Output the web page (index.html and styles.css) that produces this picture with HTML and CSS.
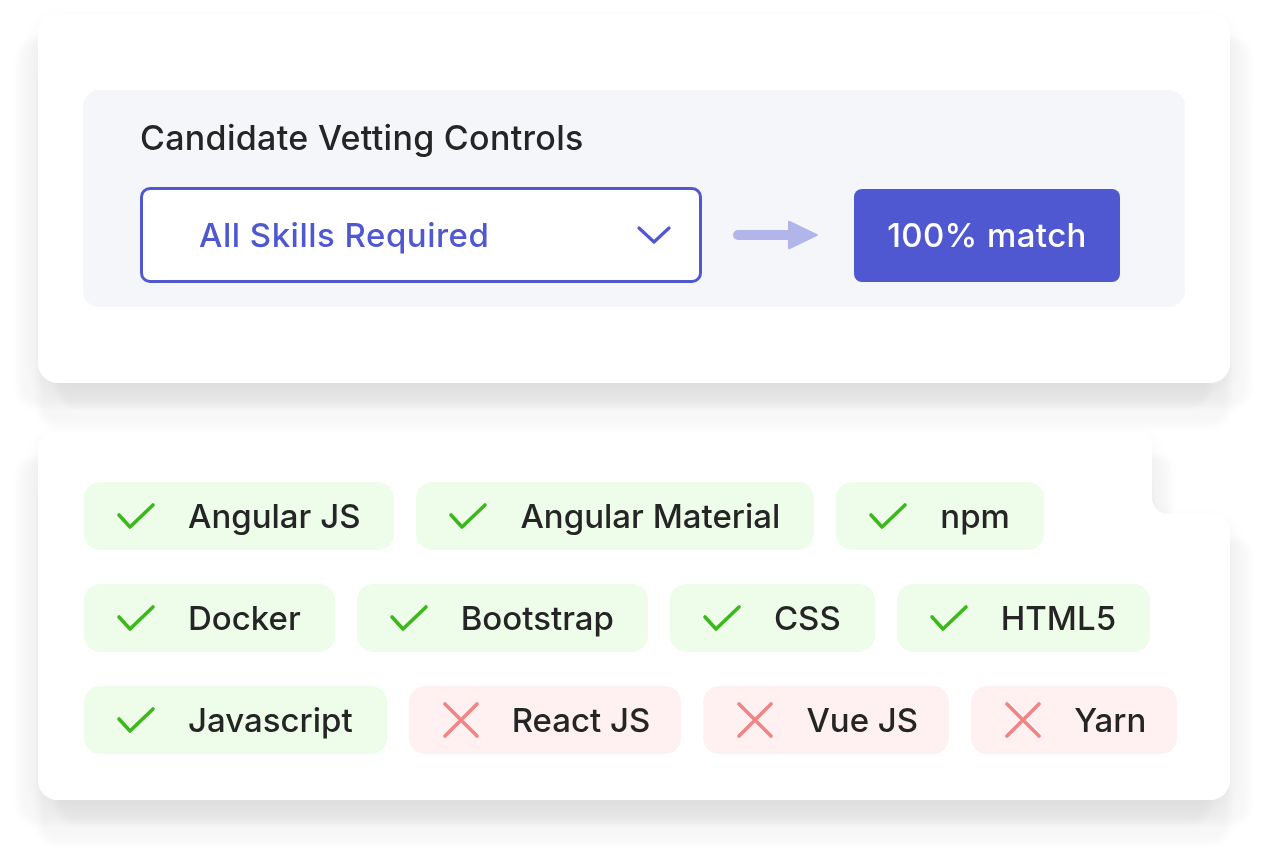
FILE: index.html
```html
<!DOCTYPE html>
<html>
<head>
<meta charset="utf-8">
<link rel="stylesheet" href="styles.css">
</head>
<body>
<div class="page">
  <div class="shadow-wrap">
    <section class="card card-top">
      <div class="panel">
        <h2 class="panel-title">Candidate Vetting Controls</h2>
        <div class="controls">
          <div class="select">
            <span class="select-text">All Skills Required</span>
            <svg class="chevron" width="34" height="18" viewBox="0 0 34 18"><path d="M2 2 L17 16 L32 2" fill="none" stroke="#4f58d1" stroke-width="3.2" stroke-linecap="round" stroke-linejoin="round"/></svg>
          </div>
          <svg class="arrow" width="86" height="30" viewBox="0 0 86 30"><line x1="5" y1="15" x2="58" y2="15" stroke="#b1b5ea" stroke-width="10" stroke-linecap="round"/><path d="M55 2 Q55 0 57 1 L84 14 Q86 15 84 16 L57 29 Q55 30 55 28 Z" fill="#b1b5ea"/></svg>
          <div class="match-btn">100% match</div>
        </div>
      </div>
    </section>
  </div>

  <div class="shadow-wrap">
    <section class="card card-skills">
      <div class="chip-row">
        <div class="chip ok"><svg class="ico" width="40" height="28" viewBox="0 0 40 28"><path d="M3 13 L14 25 L37 3" fill="none" stroke="#3cb81d" stroke-width="3.6" stroke-linecap="round" stroke-linejoin="round"/></svg><span>Angular JS</span></div>
        <div class="chip ok"><svg class="ico" width="40" height="28" viewBox="0 0 40 28"><path d="M3 13 L14 25 L37 3" fill="none" stroke="#3cb81d" stroke-width="3.6" stroke-linecap="round" stroke-linejoin="round"/></svg><span>Angular Material</span></div>
        <div class="chip ok"><svg class="ico" width="40" height="28" viewBox="0 0 40 28"><path d="M3 13 L14 25 L37 3" fill="none" stroke="#3cb81d" stroke-width="3.6" stroke-linecap="round" stroke-linejoin="round"/></svg><span>npm</span></div>
      </div>
      <div class="chip-row">
        <div class="chip ok"><svg class="ico" width="40" height="28" viewBox="0 0 40 28"><path d="M3 13 L14 25 L37 3" fill="none" stroke="#3cb81d" stroke-width="3.6" stroke-linecap="round" stroke-linejoin="round"/></svg><span>Docker</span></div>
        <div class="chip ok"><svg class="ico" width="40" height="28" viewBox="0 0 40 28"><path d="M3 13 L14 25 L37 3" fill="none" stroke="#3cb81d" stroke-width="3.6" stroke-linecap="round" stroke-linejoin="round"/></svg><span>Bootstrap</span></div>
        <div class="chip ok"><svg class="ico" width="40" height="28" viewBox="0 0 40 28"><path d="M3 13 L14 25 L37 3" fill="none" stroke="#3cb81d" stroke-width="3.6" stroke-linecap="round" stroke-linejoin="round"/></svg><span>CSS</span></div>
        <div class="chip ok"><svg class="ico" width="40" height="28" viewBox="0 0 40 28"><path d="M3 13 L14 25 L37 3" fill="none" stroke="#3cb81d" stroke-width="3.6" stroke-linecap="round" stroke-linejoin="round"/></svg><span>HTML5</span></div>
      </div>
      <div class="chip-row">
        <div class="chip ok"><svg class="ico" width="40" height="28" viewBox="0 0 40 28"><path d="M3 13 L14 25 L37 3" fill="none" stroke="#3cb81d" stroke-width="3.6" stroke-linecap="round" stroke-linejoin="round"/></svg><span>Javascript</span></div>
        <div class="chip no"><svg class="ico" width="40" height="36" viewBox="0 0 40 36"><path d="M4 2 L36 34 M36 2 L4 34" fill="none" stroke="#f08585" stroke-width="3.6" stroke-linecap="round"/></svg><span>React JS</span></div>
        <div class="chip no"><svg class="ico" width="40" height="36" viewBox="0 0 40 36"><path d="M4 2 L36 34 M36 2 L4 34" fill="none" stroke="#f08585" stroke-width="3.6" stroke-linecap="round"/></svg><span>Vue JS</span></div>
        <div class="chip no"><svg class="ico" width="40" height="36" viewBox="0 0 40 36"><path d="M4 2 L36 34 M36 2 L4 34" fill="none" stroke="#f08585" stroke-width="3.6" stroke-linecap="round"/></svg><span>Yarn</span></div>
      </div>
    </section>
  </div>
</div>
</body>
</html>
```

FILE: styles.css
```css
html, body {
  margin: 0;
  padding: 0;
  background: #ffffff;
}

body {
  font-family: "Inter", "Noto Sans", sans-serif;
  color: #252525;
  min-height: 864px;
}

.page {
  padding: 14px 0 64px 38px;
  display: flex;
  flex-direction: column;
  gap: 49px;
}

.shadow-wrap {
  width: 1192px;
  filter:
    drop-shadow(0 43px 3px rgba(0, 0, 0, 0.03))
    drop-shadow(-19px 24px 3px rgba(0, 0, 0, 0.03))
    drop-shadow(19px 24px 3px rgba(0, 0, 0, 0.03))
    drop-shadow(0 9px 9px rgba(0, 0, 0, 0.055));
}

.card {
  box-sizing: border-box;
  width: 1192px;
}

.card-top {
  background: #ffffff;
  height: 369px;
  border-radius: 20px;
  padding: 76px 45px;
}

.panel {
  background: #f5f6fa;
  border-radius: 16px;
  height: 217px;
  box-sizing: border-box;
  padding: 28px 57px 24px 57px;
}

.panel-title {
  margin: 0 0 29px 0;
  font-size: 34px;
  line-height: 40px;
  font-weight: 500;
  letter-spacing: 0.3px;
  color: #252525;
}

.controls {
  display: flex;
  align-items: center;
}

.select {
  box-sizing: border-box;
  width: 562px;
  height: 96px;
  border: 3px solid #4f58d1;
  border-radius: 10px;
  background: #ffffff;
  display: flex;
  align-items: center;
  justify-content: space-between;
  padding: 0 28px 0 56px;
}

.select-text {
  font-size: 33px;
  font-weight: 500;
  letter-spacing: 0.5px;
  color: #4f58d1;
}

.chevron {
  display: block;
}

.arrow {
  display: block;
  margin: 0 35px 0 31px;
}

.match-btn {
  width: 266px;
  height: 93px;
  border-radius: 8px;
  background: #4f58d1;
  color: #ffffff;
  display: flex;
  align-items: center;
  justify-content: center;
  font-size: 33px;
  font-weight: 500;
  letter-spacing: 0.4px;
}

/* notched card: white shape built from two rounded blocks plus a concave fillet */
.card-skills {
  position: relative;
  z-index: 0;
  height: 368px;
  padding: 50px 46px 46px 46px;
  display: flex;
  flex-direction: column;
  gap: 34px;
  background: radial-gradient(circle at 100% 0, rgba(255, 255, 255, 0) 15.5px, #ffffff 16.5px) 1114px 66px / 16px 16px no-repeat;
}

.card-skills::before,
.card-skills::after {
  content: "";
  position: absolute;
  z-index: -1;
  left: 0;
  background: #ffffff;
}

.card-skills::before {
  top: 0;
  width: 1114px;
  height: 368px;
  border-radius: 20px 14px 20px 20px;
}

.card-skills::after {
  top: 82px;
  width: 1192px;
  height: 286px;
  border-radius: 20px 18px 20px 20px;
}

.chip-row {
  display: flex;
  gap: 22px;
}

.chip {
  flex: none;
  white-space: nowrap;
  height: 68px;
  box-sizing: border-box;
  border-radius: 16px;
  display: flex;
  align-items: center;
  gap: 32px;
  padding: 0 34px 0 32px;
  font-size: 33px;
  font-weight: 500;
  color: #252525;
}

.chip.ok {
  background: #eefdea;
}

.chip.no {
  background: #fff1f1;
  gap: 31px;
  padding: 0 31px 0 32px;
}

.ico {
  display: block;
  flex: none;
}
```
